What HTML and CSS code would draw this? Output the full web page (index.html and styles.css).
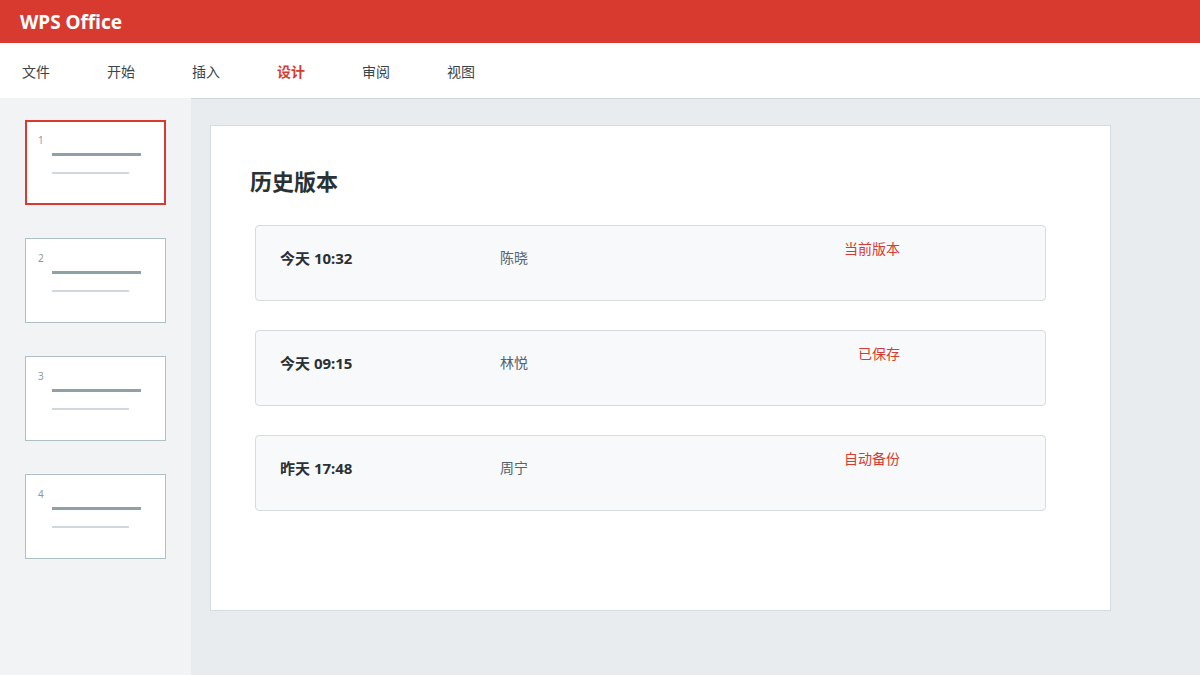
FILE: index.html
```html
<!DOCTYPE html>
<html lang="zh-CN">
<head>
  <meta charset="UTF-8">
  <meta name="viewport" content="width=device-width, initial-scale=1.0">
  <title>WPS Office - 历史版本</title>
  <link rel="stylesheet" href="styles.css">
</head>
<body>
  <header class="topbar">WPS Office</header>

  <nav class="menu">
    <span class="menu-item">文件</span>
    <span class="menu-item">开始</span>
    <span class="menu-item">插入</span>
    <span class="menu-item active">设计</span>
    <span class="menu-item">审阅</span>
    <span class="menu-item">视图</span>
  </nav>

  <div class="workspace">
    <aside class="sidebar">
      <div class="thumb active">
        <div class="thumb-num">1</div>
        <div class="thumb-line main"></div>
        <div class="thumb-line sub"></div>
      </div>
      <div class="thumb">
        <div class="thumb-num">2</div>
        <div class="thumb-line main"></div>
        <div class="thumb-line sub"></div>
      </div>
      <div class="thumb">
        <div class="thumb-num">3</div>
        <div class="thumb-line main"></div>
        <div class="thumb-line sub"></div>
      </div>
      <div class="thumb">
        <div class="thumb-num">4</div>
        <div class="thumb-line main"></div>
        <div class="thumb-line sub"></div>
      </div>
    </aside>

    <main class="canvas">
      <section class="card">
        <h1 class="card-title">历史版本</h1>
        <div class="versions">
          <div class="version">
            <span class="version-time">今天 10:32</span>
            <span class="version-user">陈晓</span>
            <span class="version-status">当前版本</span>
          </div>
          <div class="version">
            <span class="version-time">今天 09:15</span>
            <span class="version-user">林悦</span>
            <span class="version-status">已保存</span>
          </div>
          <div class="version">
            <span class="version-time">昨天 17:48</span>
            <span class="version-user">周宁</span>
            <span class="version-status">自动备份</span>
          </div>
        </div>
      </section>
    </main>
  </div>
</body>
</html>
```

FILE: styles.css
```css
body {
  margin: 0;
  font-family: "Noto Sans", "Noto Sans CJK SC", sans-serif;
  color: #2a3135;
  background: #e8ecef;
}

.topbar {
  height: 43px;
  display: flex;
  align-items: center;
  padding-left: 20px;
  background: #d93a30;
  color: #fff;
  font-size: 19px;
  font-weight: 700;
}

.menu {
  height: 55px;
  display: flex;
  align-items: center;
  padding-left: 22px;
  background: #fff;
}

.menu-item {
  width: 85px;
  font-size: 14px;
  color: #3a4449;
}

.menu-item.active {
  color: #d93a30;
  font-weight: 700;
}

.workspace {
  display: flex;
  height: 577px;
}

.sidebar {
  width: 191px;
  flex-shrink: 0;
  box-sizing: border-box;
  padding: 22px 0 0 25px;
  background: #f1f3f5;
  display: flex;
  flex-direction: column;
  gap: 33px;
}

.thumb {
  width: 141px;
  height: 85px;
  box-sizing: border-box;
  padding: 13px 0 0 12px;
  background: #fff;
  border: 1px solid #aebfc6;
}

.thumb.active {
  border-color: #d93a30;
  box-shadow: inset 0 0 0 1px #d93a30;
}

.thumb-num {
  font-size: 10px;
  line-height: 12px;
  color: #8a9aa4;
}

.thumb-line {
  margin-left: 14px;
}

.thumb-line.main {
  width: 89px;
  height: 3px;
  margin-top: 7px;
  background: #8fa0a8;
}

.thumb-line.sub {
  width: 77px;
  height: 2px;
  margin-top: 16px;
  background: #cfd8da;
}

.canvas {
  flex: 1;
  border-top: 1px solid #cfd6da;
  padding: 26px 0 0 19px;
}

.card {
  width: 901px;
  height: 486px;
  box-sizing: border-box;
  padding: 40px 0 0 39px;
  background: #fff;
  border: 1px solid #d5dbdf;
}

.card-title {
  margin: 0;
  font-size: 22px;
  line-height: 30px;
  font-weight: 700;
}

.versions {
  margin-top: 29px;
  padding-left: 5px;
  display: flex;
  flex-direction: column;
  gap: 29px;
}

.version {
  width: 791px;
  height: 76px;
  box-sizing: border-box;
  padding: 13px 145px 0 24px;
  display: grid;
  grid-template-columns: 220px 1fr auto;
  align-items: start;
  background: #f8f9fb;
  border: 1px solid #d5dbdf;
  border-radius: 4px;
  font-size: 14px;
  line-height: 20px;
}

.version-time {
  margin-top: 9px;
  font-size: 15px;
  font-weight: 700;
}

.version-user {
  margin-top: 9px;
  color: #56626a;
}

.version-status {
  text-align: right;
  color: #d93a30;
}
```
